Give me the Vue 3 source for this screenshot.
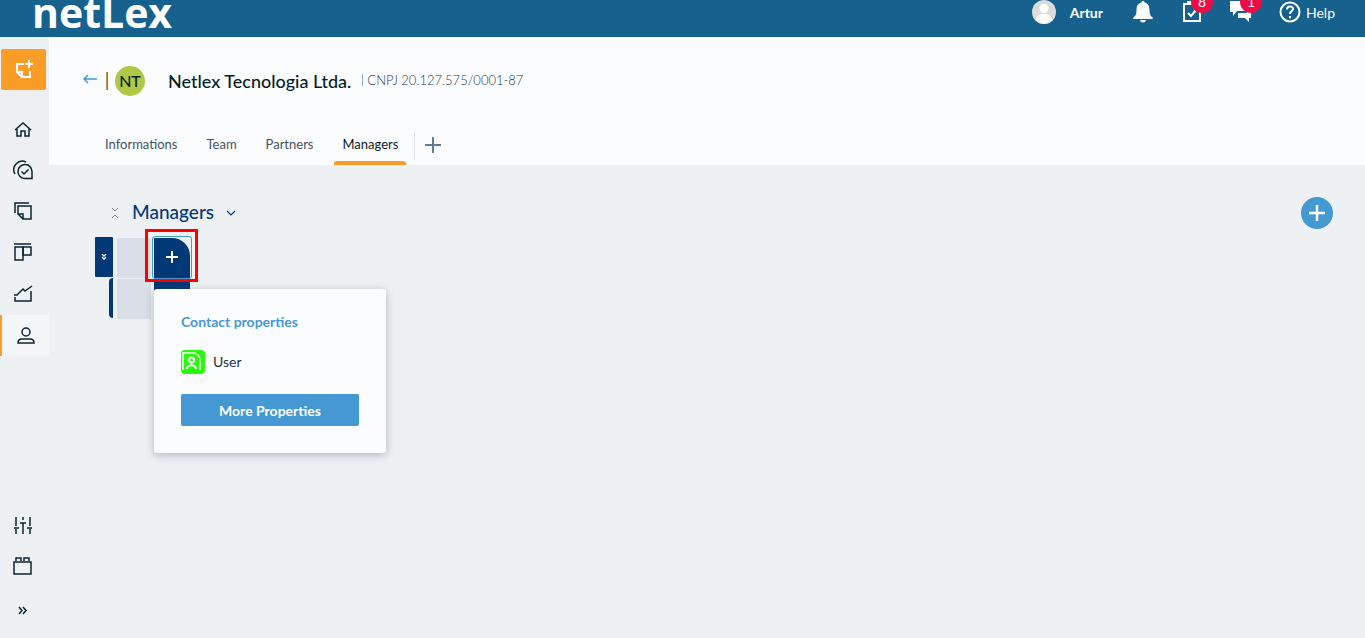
<script setup>
import { ref } from 'vue'

const tabs = ['Informations', 'Team', 'Partners', 'Managers']
const activeTab = ref('Managers')

const mainNav = [
  { name: 'Home', paths: ['M2 11 10 4l8 7', 'M4 10v7h4v-5h4v5h4v-7'] },
  { name: 'Approvals', paths: ['M19 18.500h-7.500a7 7 0 1 1 7.500-7z', 'M8.500 11.500l2.500 2.500 4.500-4.500', 'M2 14A8.500 8.500 0 0 1 13 2'] },
  { name: 'Documents', paths: ['M2 12V2h14', 'M5 5h13v13h-8l-5-5z', 'M5 13h5v5'] },
  { name: 'Boards', paths: ['M1 2h17', 'M2 5h8v13H2z', 'M10 5h8v8h-8z'] },
  { name: 'Reports', paths: ['M1 12h3l6-6 2 2 7-5', 'M2 14v4h16V8'] },
  { name: 'Contacts', active: true, paths: ['M10 2a4 4 0 1 1 0 8 4 4 0 0 1 0-8z', 'M2 17c0-3 2-4 4-4h8c2 0 4 1 4 4z'] }
]

const footNav = [
  { name: 'Settings', paths: ['M3 2v9M3 14v5M1 13h5', 'M10 2v3M10 8v11M7 8h6', 'M17 2v9M17 14v5M14 13h5'] },
  { name: 'Modules', paths: ['M1 6h17v12H1z', 'M3 5V2h5v3M11 5V2h5v3'] },
  { name: 'Expand menu', paths: ['M6 7l3 3.5L6 14M10 7l3 3.5-3 3.5'] }
]
</script>

<template>
  <div class="page">
    <header class="topbar">
      <a class="logo" href="#">netLex</a>
      <div class="tools">
        <a class="account" href="#">
          <svg class="avatar" viewBox="0 0 24 24" aria-hidden="true">
            <circle cx="12" cy="12" r="12" fill="#dcdcdc" />
            <circle cx="12" cy="8.5" r="4.5" fill="#fff" />
            <path d="M3.5 20.3C4.500 16 7.500 14 12 14s7.500 2 8.500 6.300A12 12 0 0 1 3.500 20.300z" fill="#fff" />
          </svg>
          <span>Artur</span>
        </a>
        <button class="tool bell" aria-label="Notifications">
          <svg viewBox="0 0 20 22" width="20" height="22" fill="#fff" aria-hidden="true">
            <path d="M10 0c1 0 1.500.6 1.500 1.500C15 2.200 16.500 5 16.500 9c0 5 1.500 6.500 3.200 7.500V18H.3v-1.500C2 15.500 3.500 14 3.500 9c0-4 1.500-6.800 5-7.500C8.500.6 9 0 10 0zM7 19h6c-.5 1.700-1.500 2.500-3 2.500S7.500 20.700 7 19z" />
          </svg>
        </button>
        <button class="tool tasks" aria-label="Tasks">
          <svg viewBox="0 0 18 22" width="18" height="22" fill="none" stroke="#fff" stroke-width="2" aria-hidden="true">
            <path d="M1 3h16v17H1zM5 3V1h8v2" /><path d="M5 12l3 3 5-6" />
          </svg>
          <span class="badge">8</span>
        </button>
        <button class="tool chat" aria-label="Messages">
          <svg viewBox="0 0 22 22" width="22" height="22" fill="#fff" aria-hidden="true">
            <path d="M0 0h15v10H7l-4 5v-4H0z" /><path d="M8 12h9V7h4v10h-2v4l-4-4H8z" />
          </svg>
          <span class="badge">1</span>
        </button>
        <a class="help" href="#">
          <svg viewBox="0 0 22 22" width="22" height="22" fill="none" stroke="#fff" stroke-width="2" aria-hidden="true">
            <circle cx="11" cy="11" r="9.500" />
            <path d="M8 8.500c0-4 6-4 6-.5 0 2-3 2-3 5" /><path d="M11 15v2.200" />
          </svg>
          <span>Help</span>
        </a>
      </div>
    </header>

    <div class="body">
      <aside class="sidebar">
        <button class="create" aria-label="New document">
          <svg viewBox="0 0 20 20" width="20" height="20" fill="none" stroke="#fff" stroke-width="2" aria-hidden="true">
            <path d="M10 4H3v8l5 5h8v-6" /><path d="M3 12h5v5" /><path d="M15 0v8M11 4h8" />
          </svg>
        </button>
        <nav class="menu" aria-label="Main">
          <a v-for="item in mainNav" :key="item.name" href="#" :class="['item', { active: item.active }]" :aria-label="item.name">
            <svg viewBox="0 0 20 20" aria-hidden="true"><path v-for="d in item.paths" :key="d" :d="d" /></svg>
          </a>
        </nav>
        <nav class="menu foot" aria-label="Tools">
          <a v-for="item in footNav" :key="item.name" href="#" class="item" :aria-label="item.name">
            <svg viewBox="0 0 20 20" aria-hidden="true"><path v-for="d in item.paths" :key="d" :d="d" /></svg>
          </a>
        </nav>
      </aside>

      <main class="main">
        <section class="heading">
          <div class="company">
            <a class="back" href="#" aria-label="Back">
              <svg viewBox="0 0 14 10" width="14" height="10" aria-hidden="true"><path d="M14 5H1M5 1L1 5l4 4" /></svg>
            </a>
            <span class="rule"></span>
            <span class="initials">NT</span>
            <h1>Netlex Tecnologia Ltda.</h1>
            <span class="cnpj">CNPJ 20.127.575/0001-87</span>
          </div>
          <div class="tabs">
            <button v-for="tab in tabs" :key="tab" :class="['tab', { active: tab === activeTab }]" @click="activeTab = tab">{{ tab }}</button>
            <button class="add-tab" aria-label="Add tab">
              <svg viewBox="0 0 16 16" width="16" height="16" aria-hidden="true"><path d="M8 0v16M0 8h16" /></svg>
            </button>
          </div>
        </section>

        <section class="content">
          <div class="group-bar">
            <svg class="collapse" viewBox="0 0 6 10" width="6" height="10" aria-hidden="true"><path d="M0 0l3 3 3-3M0 10l3-3 3 3" /></svg>
            <h2>Managers</h2>
            <button class="chevron" aria-label="Group options">
              <svg viewBox="0 0 10 6" width="10" height="6" aria-hidden="true"><path d="M1 1l4 4 4-4" /></svg>
            </button>
            <button class="add-group" aria-label="Add group">
              <svg viewBox="0 0 16 16" width="16" height="16" aria-hidden="true"><path d="M8 0v16M0 8h16" /></svg>
            </button>
          </div>

          <div class="board">
            <div class="handles">
              <button class="handle" aria-label="Row options">
                <svg viewBox="0 0 6 6" width="6" height="6" aria-hidden="true"><path d="M1 0l2 2 2-2M1 3l2 2 2-2" /></svg>
              </button>
              <span class="stripe"></span>
            </div>
            <div class="cells"><span class="cell"></span><span class="cell"></span></div>
            <div class="adder">
              <button class="add-property" aria-label="Add property">
                <svg viewBox="0 0 12 12" width="12" height="12" aria-hidden="true"><path d="M6 0v12M0 6h12" /></svg>
              </button>
              <span class="adder-tail"></span>
              <span class="highlight"></span>
              <div class="popup">
                <h3>Contact properties</h3>
                <button class="property">
                  <svg viewBox="0 0 24 24" width="24" height="24" fill="none" stroke="#fff" aria-hidden="true">
                    <rect width="24" height="24" rx="4" fill="#2bf80f" stroke="none" />
                    <path d="M2 20V3h10c5 0 7 4 7 8v9" stroke-width="1.500" />
                    <circle cx="10.500" cy="10" r="2.500" stroke-width="2" />
                    <path d="M6 19c0-5 9-5 9 0" stroke-width="2" />
                  </svg>
                  <span>User</span>
                </button>
                <button class="more">More Properties</button>
              </div>
            </div>
          </div>
        </section>
      </main>
    </div>
  </div>
</template>

<style>
body { background: #eef1f4; }
</style>

<style scoped>
.page {
  display: flex;
  flex-direction: column;
  min-height: 100vh;
  background: #eef1f4;
  color: #42545f;
  font: 14px/20px Lato, "Liberation Sans", sans-serif;
}
.page *, .page *::before, .page *::after { box-sizing: border-box; }
button { margin: 0; padding: 0; border: 0; background: none; color: inherit; font: inherit; cursor: pointer; }
a { color: inherit; text-decoration: none; }
svg { display: block; flex: none; }
h1, h2, h3 { margin: 0; font-weight: 500; }

.topbar {
  display: flex;
  align-items: center;
  justify-content: space-between;
  height: 37px;
  padding: 0 30px 0 32px;
  overflow: hidden;
  background: #16618e;
  color: #fff;
}
.logo { padding-bottom: 14px; font: 700 41px/44px "Open Sans", sans-serif; }
.tools { display: flex; align-items: center; padding-bottom: 14px; }
.account { display: flex; align-items: center; gap: 14px; margin-right: 30px; font-weight: 700; }
.avatar { width: 24px; height: 24px; }
.account span, .help span { padding-top: 2px; }
.tool { position: relative; }
.bell { margin-right: 30px; }
.tasks { margin-right: 29px; }
.chat { margin-right: 27px; }
.badge {
  position: absolute;
  top: -10px;
  left: 8px;
  width: 22px;
  height: 22px;
  border-radius: 50%;
  background: #ed0c45;
  font-size: 14px;
  line-height: 22px;
  text-align: center;
}
.chat .badge { left: 10px; }
.help { display: flex; align-items: center; gap: 5px; }

.body { display: flex; flex: 1; }
.sidebar { display: flex; flex-direction: column; flex: none; width: 49px; padding: 12px 0 6px; }
.create {
  display: flex;
  align-items: center;
  justify-content: center;
  width: 45px;
  height: 41px;
  margin: 0 0 20px 1px;
  border-radius: 2px;
  background: #f99d27;
}
.menu { display: flex; flex-direction: column; }
.item { display: flex; align-items: center; height: 41px; padding: 0 0 3px 13px; }
.item svg { width: 20px; height: 20px; fill: none; stroke: #0b2430; stroke-width: 1.5; }
.item.active { padding: 0 0 0 14px; border-left: 2px solid #f99d27; background: #f3f5f7; }
.foot { margin-top: auto; }
.foot .item:last-child { margin-top: 3px; }

.main { flex: 1; min-width: 0; }
.heading { display: flex; flex-direction: column; height: 128px; background: #fbfcfe; }
.company { display: flex; align-items: center; padding: 29px 34px 0; }
.back { margin-bottom: 4px; }
.back path { fill: none; stroke: #4499d2; stroke-width: 1.5; }
.rule { width: 2px; height: 18px; margin: 0 7px 0 9px; border-left: 1px solid #c59258; border-right: 1px solid #4c87a5; }
.initials {
  width: 30px;
  height: 30px;
  border-radius: 50%;
  background: #b0c845;
  color: #071f29;
  font-size: 16px;
  font-weight: 500;
  line-height: 30px;
  text-align: center;
}
h1 { margin-left: 23px; color: #071c26; font-size: 18px; line-height: 30px; }
.cnpj { margin: 0 0 2px 11px; padding-left: 4px; border-left: 1px solid #8aaed0; font-size: 13px; line-height: 12px; font-weight: 300; color: #2b3d48; }
.tabs { display: flex; margin-top: auto; padding-left: 48px; gap: 13px; }
.tab { position: relative; height: 41px; padding: 0 8px 2px; font-size: 13px; }
.tab.active { color: #071c26; }
.tab.active::after {
  content: "";
  position: absolute;
  right: 0;
  bottom: 0;
  left: 0;
  height: 4px;
  border-radius: 3px 3px 0 0;
  background: #f99d27;
}
.add-tab { height: 28px; margin: 7px 0 0 -5px; padding-left: 10px; border-left: 1px solid #dfe3e6; }
.add-tab path { stroke: #607d93; stroke-width: 2; }

.content { padding: 32px 32px 32px 46px; }
.group-bar { display: flex; align-items: center; height: 32px; }
.collapse { margin: 0 14px 0 17px; fill: none; stroke: #7c8b96; }
h2 { padding-bottom: 2px; color: #013976; font-size: 19px; line-height: 30px; }
.chevron { margin-left: 12px; }
.chevron path { fill: none; stroke: #013976; stroke-width: 1.2; }
.add-group {
  display: flex;
  align-items: center;
  justify-content: center;
  width: 32px;
  height: 32px;
  margin-left: auto;
  border-radius: 50%;
  background: #4499d2;
}
.add-group path { stroke: #fff; stroke-width: 2.5; }

.board { display: flex; padding-top: 8px; }
.handles { display: flex; flex-direction: column; align-items: flex-end; gap: 1px; width: 18px; margin-right: 4px; }
.handle { display: flex; align-items: center; justify-content: center; width: 18px; height: 40px; border-radius: 1px; background: #013976; }
.handle path { fill: none; stroke: #fff; stroke-width: 1.4; }
.stripe { width: 4px; height: 40px; border-radius: 4px 0 0 4px; background: #013976; }
.cells { display: flex; flex-direction: column; gap: 1px; padding-top: 1px; }
.cell { width: 34px; height: 40px; border-radius: 1px; background: #d8dee6; }
.adder { position: relative; width: 36px; margin: 1px 0 0 3px; }
.add-property {
  display: flex;
  align-items: center;
  justify-content: center;
  width: 36px;
  height: 40px;
  padding-bottom: 2px;
  border-radius: 0 18px 0 0;
  background: #013976;
}
.add-property path { stroke: #fff; stroke-width: 2; }
.add-property::before {
  content: "";
  position: absolute;
  top: -2px;
  left: -2px;
  width: 40px;
  height: 43px;
  border: 1px solid #4499d2;
  border-radius: 3px;
}
.adder-tail { display: block; height: 12px; margin-top: 1px; background: #013976; }
.highlight { position: absolute; top: -9px; left: -9px; width: 53px; height: 53px; border: 3px solid #fe0000; }
.popup {
  position: absolute;
  top: 51px;
  left: 0;
  width: 232px;
  padding: 23px 27px 27px;
  border-radius: 3px;
  background: #fbfcfe;
  box-shadow: 0 2px 8px rgba(50, 70, 80, 0.35);
}
h3 { color: #4499d2; font-size: 14px; line-height: 20px; font-weight: 700; }
.property { display: flex; align-items: center; gap: 8px; height: 24px; margin: 18px 0 20px; color: #1d323d; }
.more { display: block; width: 100%; height: 32px; border-radius: 2px; background: #4499d2; color: #fff; font-weight: 700; line-height: 34px; }
</style>
